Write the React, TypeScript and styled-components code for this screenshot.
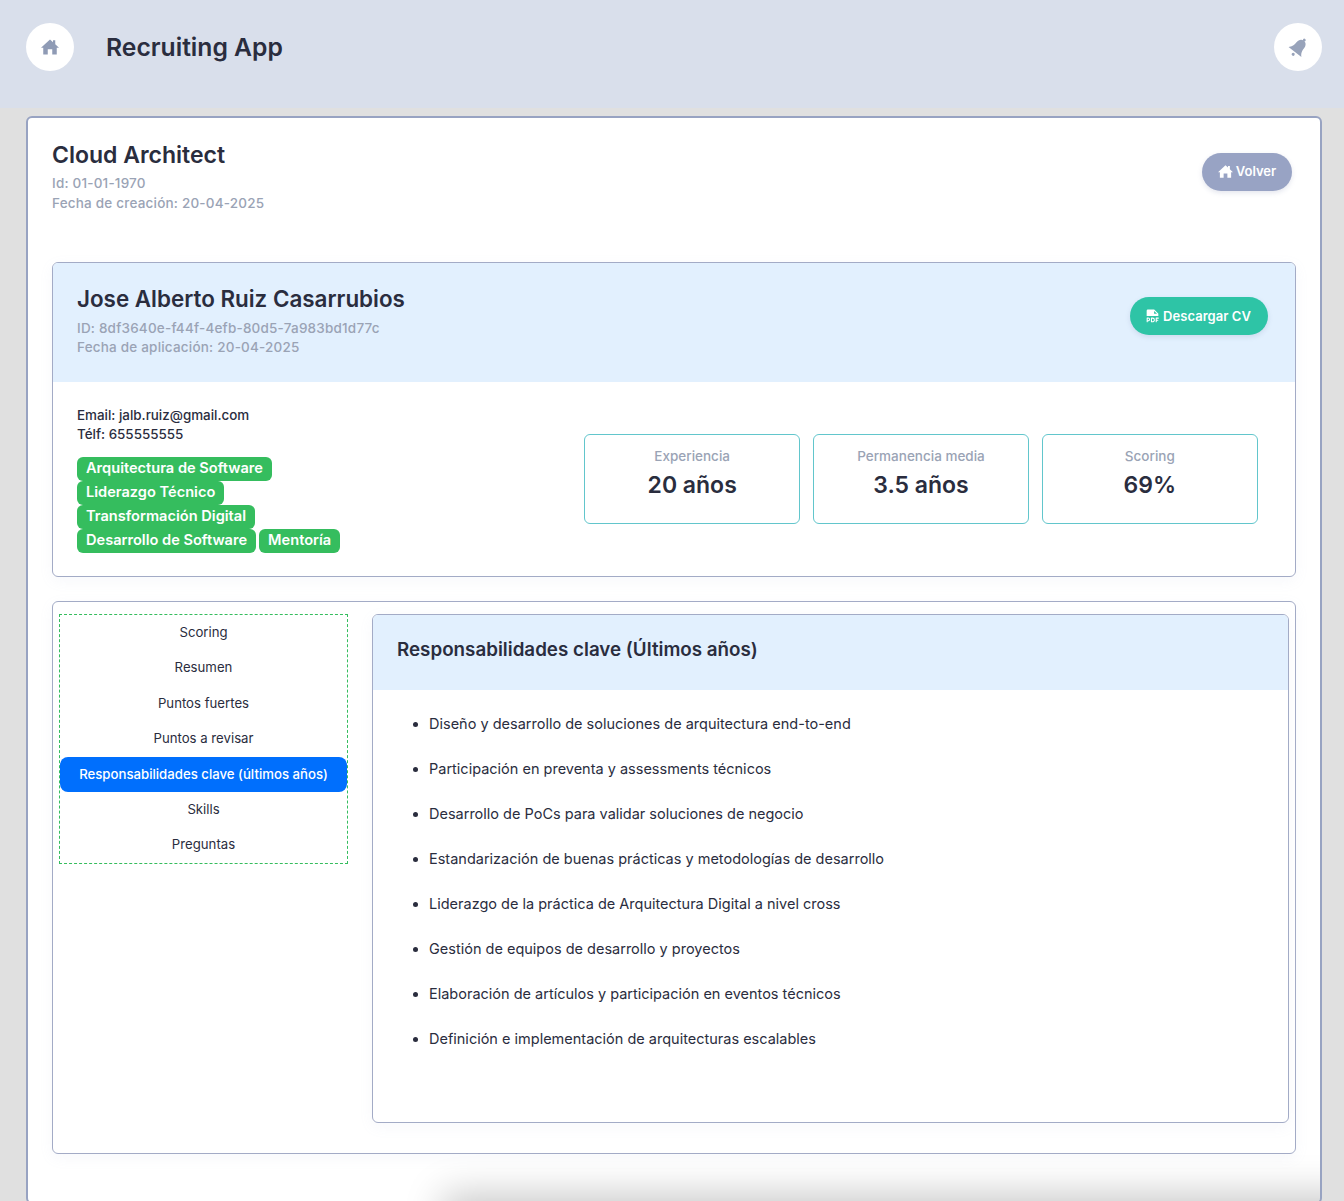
import * as React from "react";
import styled, { createGlobalStyle } from "styled-components";
import { PiFilePdfFill } from "react-icons/pi";

const GlobalStyle = createGlobalStyle`
	html, body {
		margin: 0;
		padding: 0;
		height: 1201px;
		overflow: hidden;
		background: #e0e0e0;
		font-family: "Inter", "Liberation Sans", sans-serif;
		color: #2a2d3e;
	}
	* { box-sizing: border-box; }
`;

const TopBar = styled.header`
	height: 108px;
	background: #d9dfeb;
	padding: 23px 22px 0 26px;
	display: flex;
	justify-content: space-between;
	align-items: flex-start;
`;
const TopLeft = styled.div`
	display: flex;
	align-items: center;
	gap: 32px;
`;
const RoundButton = styled.div`
	width: 48px;
	height: 48px;
	border-radius: 50%;
	background: #fff;
	color: #8f9bb5;
	display: flex;
	align-items: center;
	justify-content: center;
`;
const BellSvg = styled.svg`
	width: 23px;
	height: 23px;
	color: #98a3ba;
	transform: rotate(38deg);
`;
const AppTitle = styled.h1`
	margin: 0;
	font-size: 24.7px;
	font-weight: 600;
`;
const MainCard = styled.main`
	margin: 8px 22px 0 26px;
	height: 1088px;
	background: #fff;
	border: 2px solid #98a3c2;
	border-radius: 6px;
	padding: 22px 24px 0 24px;
	position: relative;
	overflow: hidden;
`;
const BottomShade = styled.div`
	position: absolute;
	left: 425px;
	right: -60px;
	top: 1086px;
	height: 30px;
	box-shadow: 0 0 38px 10px rgba(0, 0, 0, 0.22);
`;
const JobHead = styled.div`
	display: flex;
	justify-content: space-between;
	align-items: flex-start;
	height: 122px;
`;
const JobTitle = styled.h2`
	margin: 0;
	font-size: 23px;
	line-height: 30px;
	font-weight: 600;
`;
const Meta = styled.div`
	font-size: 13.5px;
	line-height: 20px;
	letter-spacing: 0.2px;
	font-weight: 500;
	color: #9aa3b5;
`;
const JobMeta = styled(Meta)`
	margin-top: 3px;
`;
const CandidateMeta = styled(Meta)`
	line-height: 19px;
`;
const PillButton = styled.div<{ $bg: string }>`
	display: inline-flex;
	align-items: center;
	justify-content: center;
	gap: 3px;
	height: 38px;
	border-radius: 19px;
	background: ${(p) => p.$bg};
	color: #fff;
	font-size: 13px;
	font-weight: 600;
	box-shadow: 0 2px 5px rgba(120, 130, 170, 0.2);
`;
const BackButton = styled(PillButton)`
	width: 90px;
	margin: 13px 4px 0 0;
	padding-bottom: 2px;
`;
const CvButton = styled(PillButton)`
	width: 138px;
	margin: 13px 27px 0 0;
	padding-right: 3px;
	gap: 2px;
	letter-spacing: 0.05px;
	svg { font-size: 17px; }
`;
const Panel = styled.section`
	border: 1px solid #a3abc6;
	border-radius: 6px;
	overflow: hidden;
	box-shadow: 0 4px 14px rgba(150, 160, 200, 0.08);
`;
const CandidateHead = styled.div`
	height: 119px;
	background: #e2f0fe;
	padding: 21px 0 0 24px;
	display: flex;
	justify-content: space-between;
	align-items: flex-start;
`;
const CandidateName = styled.h3`
	margin: 0 0 5px;
	font-size: 22.4px;
	line-height: 30px;
	font-weight: 600;
`;
const CandidateBody = styled.div`
	height: 194px;
	padding: 24px 37px 0 24px;
	display: flex;
	justify-content: space-between;
	align-items: flex-start;
`;
const Contact = styled.div`
	font-size: 13.4px;
	line-height: 19px;
	font-weight: 500;
`;
const Tags = styled.div`
	display: flex;
	flex-wrap: wrap;
	gap: 0 3px;
	width: 300px;
	margin-top: 13px;
`;
const Tag = styled.span`
	height: 24px;
	line-height: 23px;
	padding: 0 9px;
	border-radius: 6px;
	background: #35bd5e;
	color: #fff;
	font-size: 14.6px;
	font-weight: 600;
`;
const Stats = styled.div`
	display: grid;
	grid-template-columns: repeat(3, 1fr);
	gap: 12.5px;
	width: 674px;
	margin-top: 28px;
`;
const Stat = styled.div`
	height: 90px;
	border: 1px solid #62c6cc;
	border-radius: 6px;
	padding-top: 11px;
	text-align: center;
`;
const StatLabel = styled.div`
	font-size: 13.5px;
	line-height: 20px;
	font-weight: 500;
	color: #9aa3b5;
`;
const StatValue = styled.div`
	margin-top: 1px;
	font-size: 23px;
	line-height: 36px;
	font-weight: 600;
`;
const DetailPanel = styled(Panel)`
	margin-top: 24px;
	height: 553px;
	padding: 12px 6px 0;
	display: flex;
	align-items: flex-start;
	gap: 24px;
`;
const Menu = styled.nav`
	width: 289px;
	flex: none;
	border: 1px dashed #35bd5e;
`;
const MenuItem = styled.div<{ $active?: boolean }>`
	height: 35.4px;
	line-height: 35px;
	text-align: center;
	font-size: 13.2px;
	font-weight: ${(p) => (p.$active ? 500 : 400)};
	border-radius: 8px;
	background: ${(p) => (p.$active ? "#006ffd" : "transparent")};
	color: ${(p) => (p.$active ? "#fff" : "#2a2d3e")};
`;
const Content = styled(Panel)`
	flex: 1;
	height: 509px;
`;
const ContentHead = styled.div`
	height: 75px;
	background: #e2f0fe;
	padding: 0 0 6px 24px;
	display: flex;
	align-items: center;
`;
const ContentTitle = styled.h4`
	margin: 0;
	font-size: 18.8px;
	font-weight: 600;
`;
const List = styled.ul`
	margin: 0;
	padding: 11px 0 0 56px;
`;
const ListItem = styled.li`
	height: 45px;
	line-height: 45px;
	font-size: 14.5px;
	font-weight: 400;
`;

const HomeIcon: React.FC<{ size: number }> = ({ size }) => (
	<svg width={size} height={size} viewBox="0 0 24 24" fill="currentColor">
		<path d="M12 2 L16 5.6 V3 H19 V8.3 L24 13 H21 V22 H15 V15 H9 V22 H3 V13 H0 Z" />
	</svg>
);

const BellIcon: React.FC = () => (
	<BellSvg viewBox="0 0 24 24" fill="currentColor">
		<circle cx="12" cy="2.2" r="1.5" />
		<path d="M12 3c-3 0-5 2.3-5 6 0 5-1.2 6.6-3.5 9h17c-2.3-2.4-3.5-4-3.5-9 0-3.7-2-6-5-6z" />
		<circle cx="12" cy="21" r="1.6" />
	</BellSvg>
);

const tags = ["Arquitectura de Software", "Liderazgo Técnico", "Transformación Digital", "Desarrollo de Software", "Mentoría"];
const stats = [
	{ label: "Experiencia", value: "20 años" },
	{ label: "Permanencia media", value: "3.5 años" },
	{ label: "Scoring", value: "69%" },
];
const menu = ["Scoring", "Resumen", "Puntos fuertes", "Puntos a revisar", "Responsabilidades clave (últimos años)", "Skills", "Preguntas"];
const duties = [
	"Diseño y desarrollo de soluciones de arquitectura end-to-end",
	"Participación en preventa y assessments técnicos",
	"Desarrollo de PoCs para validar soluciones de negocio",
	"Estandarización de buenas prácticas y metodologías de desarrollo",
	"Liderazgo de la práctica de Arquitectura Digital a nivel cross",
	"Gestión de equipos de desarrollo y proyectos",
	"Elaboración de artículos y participación en eventos técnicos",
	"Definición e implementación de arquitecturas escalables",
];

const App: React.FC = () => (
	<>
		<GlobalStyle />
		<TopBar>
			<TopLeft>
				<RoundButton><HomeIcon size={18} /></RoundButton>
				<AppTitle>Recruiting App</AppTitle>
			</TopLeft>
			<RoundButton><BellIcon /></RoundButton>
		</TopBar>
		<MainCard>
			<JobHead>
				<div>
					<JobTitle>Cloud Architect</JobTitle>
					<JobMeta>
						Id: 01-01-1970<br />
						Fecha de creación: 20-04-2025
					</JobMeta>
				</div>
				<BackButton $bg="#98a3c4"><HomeIcon size={15} /> Volver</BackButton>
			</JobHead>
			<Panel>
				<CandidateHead>
					<div>
						<CandidateName>Jose Alberto Ruiz Casarrubios</CandidateName>
						<CandidateMeta>
							ID: 8df3640e-f44f-4efb-80d5-7a983bd1d77c<br />
							Fecha de aplicación: 20-04-2025
						</CandidateMeta>
					</div>
					<CvButton $bg="#2ec4a6"><PiFilePdfFill /> Descargar CV</CvButton>
				</CandidateHead>
				<CandidateBody>
					<div>
						<Contact>
							Email: jalb.ruiz@gmail.com<br />
							Télf: 655555555
						</Contact>
						<Tags>
							{tags.map((t) => <Tag key={t}>{t}</Tag>)}
						</Tags>
					</div>
					<Stats>
						{stats.map((s) => (
							<Stat key={s.label}>
								<StatLabel>{s.label}</StatLabel>
								<StatValue>{s.value}</StatValue>
							</Stat>
						))}
					</Stats>
				</CandidateBody>
			</Panel>
			<DetailPanel>
				<Menu>
					{menu.map((m, i) => <MenuItem key={m} $active={i === 4}>{m}</MenuItem>)}
				</Menu>
				<Content>
					<ContentHead>
						<ContentTitle>Responsabilidades clave (Últimos años)</ContentTitle>
					</ContentHead>
					<List>
						{duties.map((d) => <ListItem key={d}>{d}</ListItem>)}
					</List>
				</Content>
			</DetailPanel>
			<BottomShade />
		</MainCard>
	</>
);

export default App;
